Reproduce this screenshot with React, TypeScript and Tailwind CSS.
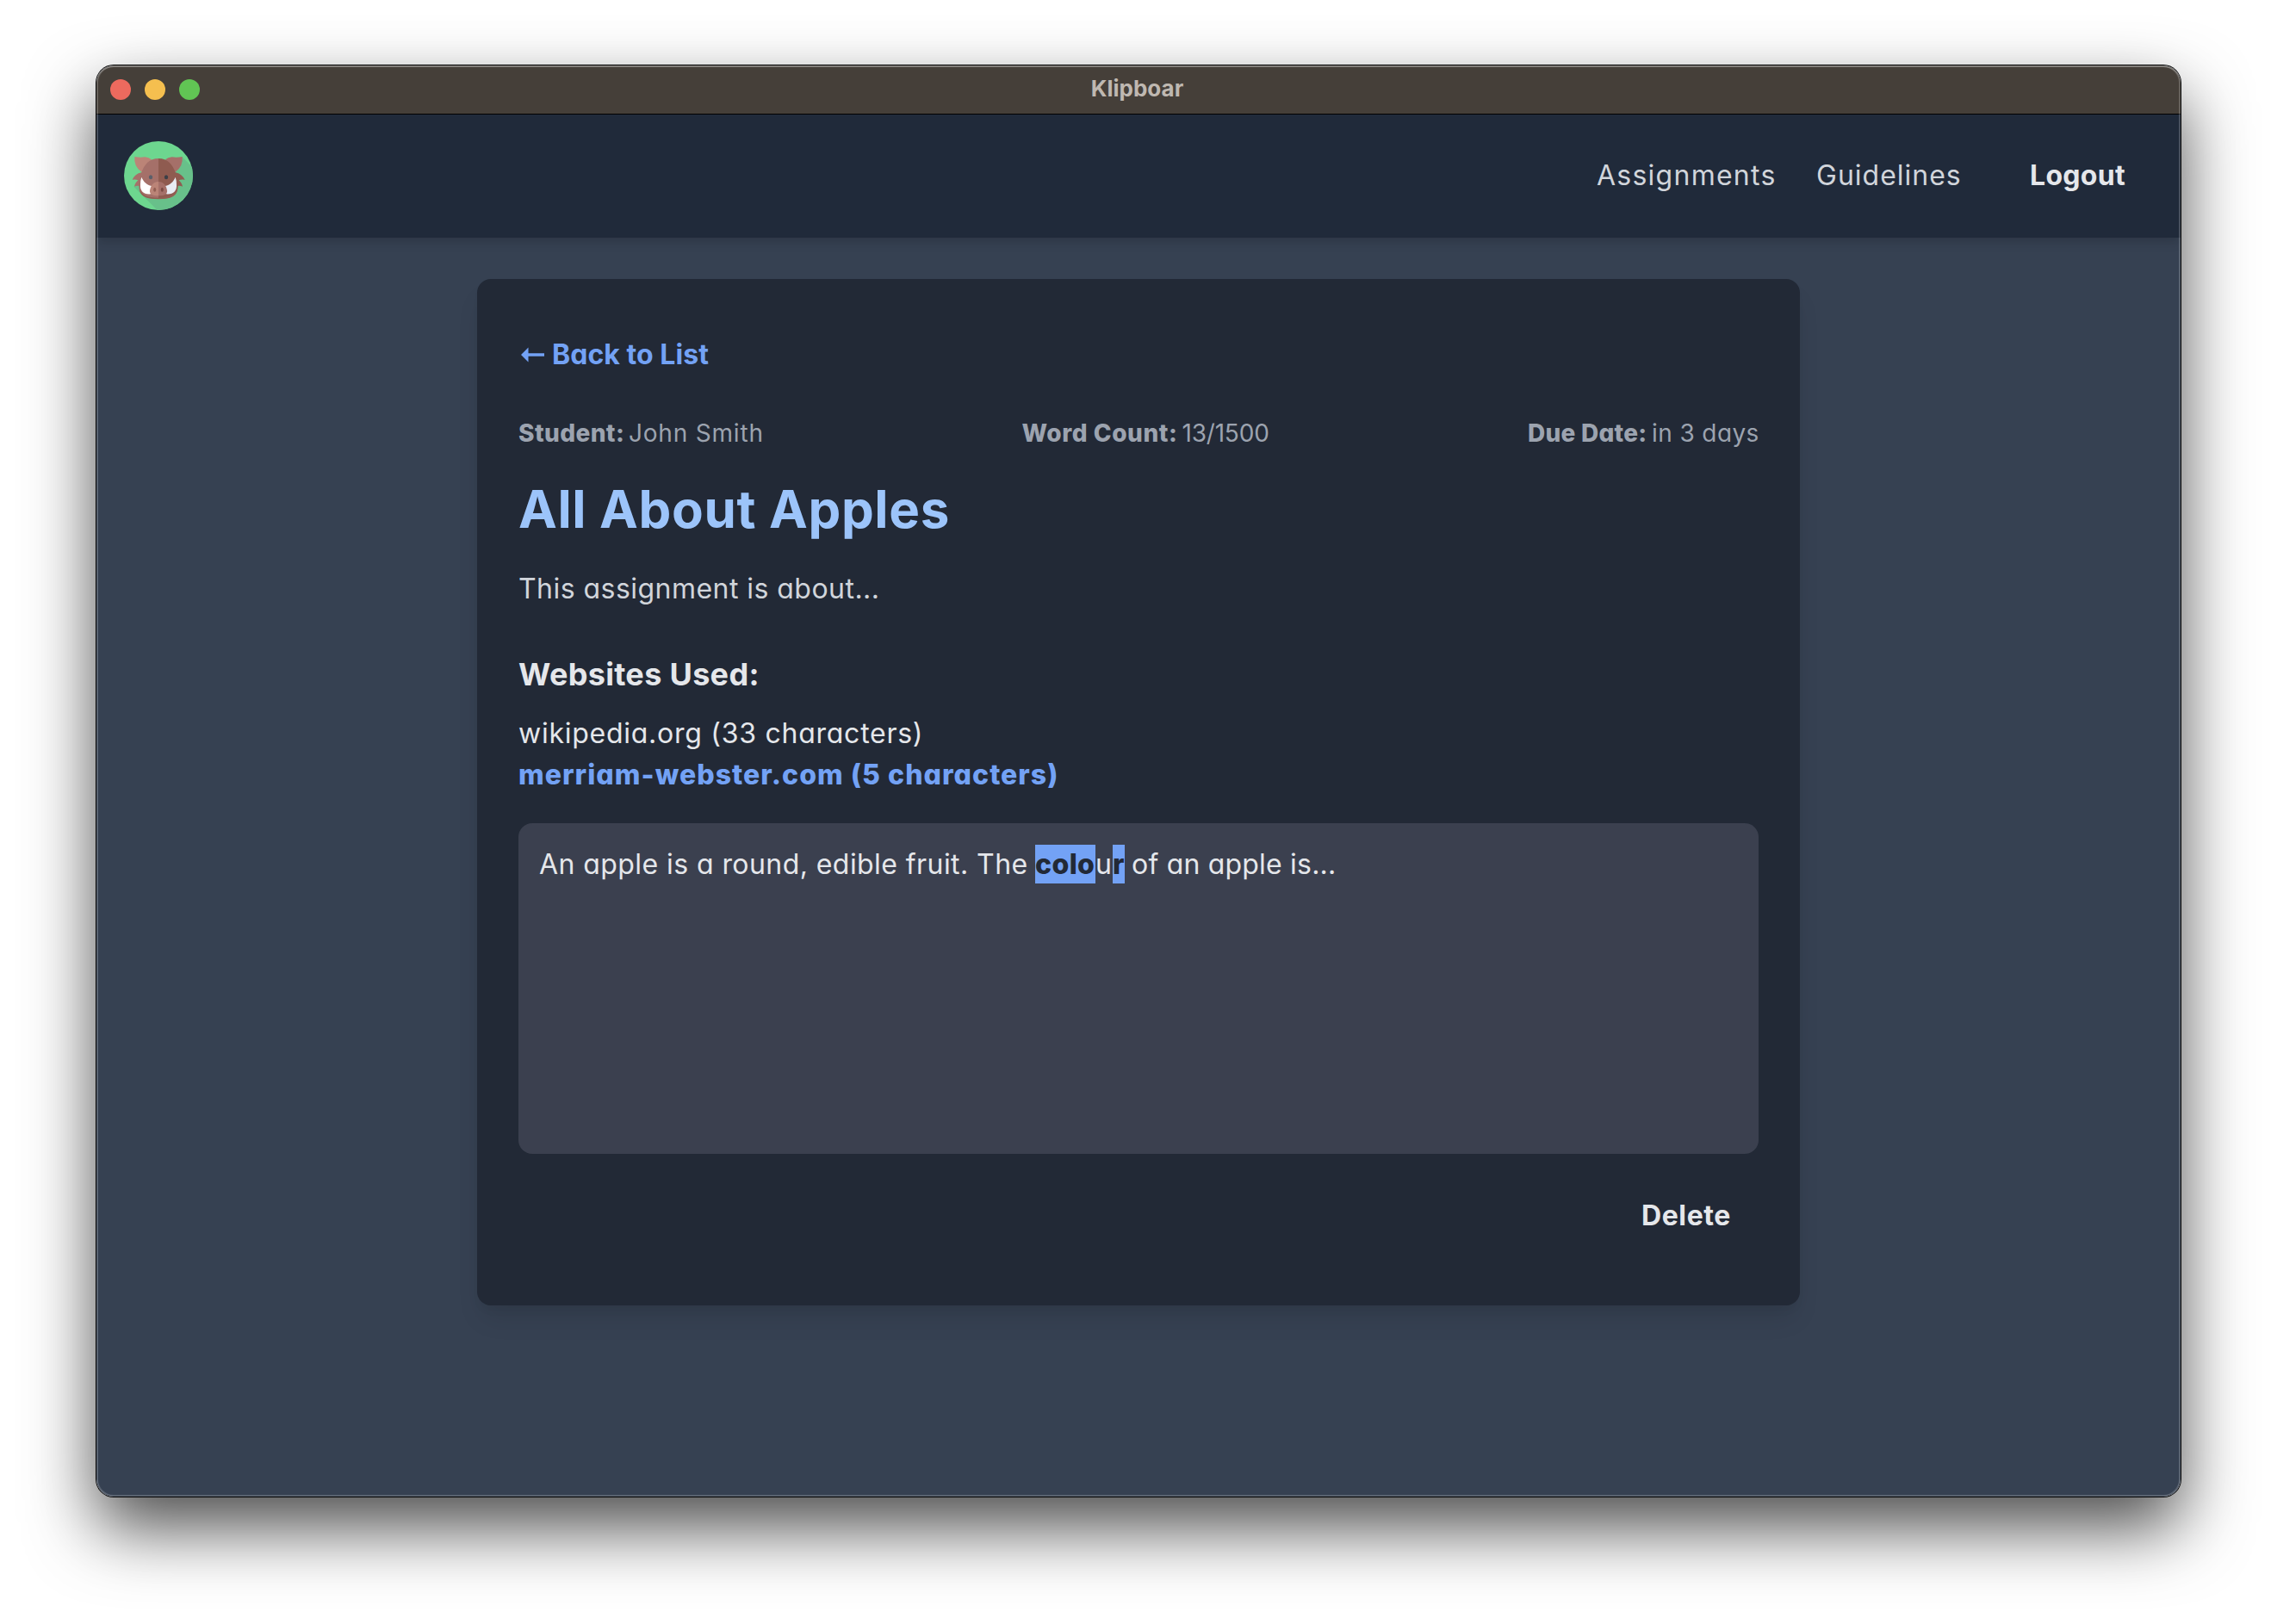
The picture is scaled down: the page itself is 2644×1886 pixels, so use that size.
import React from "react";

function BoarLogo() {
  return (
    <svg className="h-20 w-20 shrink-0" viewBox="132 312 240 240">
      <defs>
        <clipPath id="disc">
          <circle cx="252" cy="432" r="120" />
        </clipPath>
      </defs>
      <circle cx="252" cy="432" r="120" fill="#6dd68f" />
      <path clipPath="url(#disc)" d="M334 366L380 412V560H256L166 470L252 440Z" fill="#68c08a" />
      <path d="M169 366Q188 370 205 367Q219 369 228 376L194 420Q165 400 169 366Z" fill="#bb8477" />
      <path d="M335 366Q316 370 299 367Q285 369 276 376L310 420Q339 400 335 366Z" fill="#a57069" />
      <path d="M252 372C220 372 202 394 193 421C178 424 166 433 161 447C169 444 176 446 181 448C174 455 169 462 168 470C174 467 180 467 184 468C183 498 205 513 252 513Z" fill="#a57069" />
      <path d="M252 372C284 372 302 394 311 421C326 424 338 433 344 447C335 444 328 446 323 448C330 455 335 462 336 470C330 467 324 467 320 468C321 498 299 513 252 513Z" fill="#8f5b50" />
      <path d="M186 474C190 499 215 509 252 509C289 509 314 499 318 474C320 500 299 514 252 514C205 514 184 500 186 474Z" fill="#935e53" />
      <path d="M193 437C200 454 212 464 228 468L226 496C200 498 187 486 189 462Q189 448 193 437Z" fill="#ffffff" />
      <path d="M311 437C304 454 292 464 276 468L278 496C304 498 317 486 315 462Q315 448 311 437Z" fill="#e8ecf4" />
      <path d="M252 453C234 453 225 467 222 483C220 496 230 502 252 502Z" fill="#bb8477" />
      <path d="M252 453C270 453 279 467 282 483C284 496 274 502 252 502Z" fill="#a57069" />
      <ellipse cx="239" cy="481" rx="4.5" ry="7.5" fill="#935e53" />
      <ellipse cx="265" cy="481" rx="4.5" ry="7.5" fill="#7b4a43" />
      <ellipse cx="225" cy="437" rx="6.5" ry="7.5" fill="#5a5f6a" />
      <ellipse cx="279" cy="437" rx="6.5" ry="7.5" fill="#3c3f47" />
    </svg>
  );
}

function TitleBar() {
  return (
    <div className="relative flex h-[57px] shrink-0 items-center border-b border-black bg-[#453f39] pl-4">
      <div className="flex gap-4">
        <span className="h-6 w-6 rounded-full bg-[#ed6a5e]" />
        <span className="h-6 w-6 rounded-full bg-[#f5bf4f]" />
        <span className="h-6 w-6 rounded-full bg-[#61c554]" />
      </div>
      <div className="absolute inset-0 flex items-center justify-center pr-[3px] pb-[3px] text-[26px] font-bold text-[#bfb8b1]">
        <span>Klipboar</span>
      </div>
    </div>
  );
}

function Header() {
  return (
    <header className="relative flex h-[143px] items-center justify-between bg-[#202a3a] px-8 pb-px shadow-[0_8px_12px_-2px_rgba(0,0,0,0.1),0_4px_8px_-2px_rgba(0,0,0,0.06)]">
      <BoarLogo />
      <nav className="flex items-center text-[32px] leading-[48px] whitespace-nowrap text-[#d1d5db]">
        <a className="w-[207px] tracking-[1.25px]">Assignments</a>
        <a className="ml-12 w-[168px] tracking-[1px]">Guidelines</a>
        <button className="ml-12 px-8 font-bold text-[#e5e7eb]">
          <span className="block w-[111px] text-left tracking-[0.3px]">Logout</span>
        </button>
      </nav>
    </header>
  );
}

type MetaProps = { label: string; value: string; labelClass: string; valueClass: string };

function Meta({ label, value, labelClass, valueClass }: MetaProps) {
  return (
    <p className="flex">
      <strong className={labelClass}>{label}</strong>
      <span className={valueClass}>{value}</span>
    </p>
  );
}

export default function App() {
  return (
    <div className="h-[1886px] w-[2644px] overflow-hidden bg-white px-[112px] pt-[76px] font-['Inter',sans-serif] [font-feature-settings:'cv11']">
      <div className="relative h-[1662px] w-[2420px] rounded-[20px] shadow-[0_0_0_1px_#000,0_36px_80px_rgba(0,0,0,0.7)]">
        <div className="flex h-full flex-col overflow-hidden rounded-[20px] bg-[#364152]">
          <div className="[font-feature-settings:normal]">
            <TitleBar />
          </div>
          <Header />
          <main className="flex justify-center pt-12">
            <section className="h-[1192px] w-[1536px] rounded-2xl bg-[#222936] px-12 pt-16 text-[32px] leading-[48px] whitespace-nowrap text-[#e5e7eb] shadow-[0_20px_30px_-6px_rgba(0,0,0,0.1),0_8px_12px_-4px_rgba(0,0,0,0.05)]">
              <a className="flex h-12 items-center font-bold text-[#73a2f5]">
                <svg className="mr-[9px] ml-[3px] h-[18px] w-[27px]" viewBox="0 0 27 18" fill="currentColor">
                  <path d="M0 9L8.5 0.5V7.2H27V10.8H8.5V17.5Z" />
                </svg>
                <span className="tracking-[0.05px]">Back to List</span>
              </a>
              <div className="mt-[47px] flex justify-between text-[28px] leading-10 text-[#9ca3af]">
                <Meta label="Student:" value="John Smith" labelClass="w-[128px] font-extrabold tracking-[0.4px]" valueClass="w-[156px] tracking-[0.8px]" />
                <Meta label="Word Count:" value="13/1500" labelClass="w-[186px] font-extrabold tracking-[0.55px]" valueClass="w-[101px] tracking-[-0.2px]" />
                <Meta label="Due Date:" value="in 3 days" labelClass="w-[144px] font-extrabold tracking-[0.25px]" valueClass="w-[124px] tracking-[0.4px]" />
              </div>
              <h1 className="mt-8 text-[60px] leading-[72px] font-bold tracking-[0.65px] text-[#9cc4fa]">All About Apples</h1>
              <p className="mt-[33px] tracking-[0.46px] text-[#d1d5db]">This assignment is about...</p>
              <h2 className="mt-[47px] text-[36px] leading-[56px] font-bold tracking-[0.32px]">Websites Used:</h2>
              <ul className="mt-[17px]">
                <li className="tracking-[0.74px]">wikipedia.org (33 characters)</li>
                <li className="font-extrabold tracking-[1.05px] text-[#73a2f5]">merriam-webster.com (5 characters)</li>
              </ul>
              <div className="mt-8 flex h-96 items-start rounded-2xl bg-[#3b404f] p-6">
                <span className="w-[576px] tracking-[0.43px]">An apple is a round, edible fruit. The</span>
                <mark className="mt-px h-[45px] w-[70px] bg-[#73a2f5] leading-[46px] font-extrabold tracking-[0.4px] text-[#222936]">colo</mark>
                <span className="w-5">u</span>
                <mark className="mt-px h-[45px] w-[14px] bg-[#73a2f5] leading-[46px] font-extrabold text-[#222936]">r</mark>
                <span className="ml-2 tracking-[0.2px]">of an apple is...</span>
              </div>
              <div className="mt-12 flex justify-end pr-8">
                <button className="w-[104px] text-left font-bold tracking-[0.6px]">Delete</button>
              </div>
            </section>
          </main>
        </div>
        <div className="pointer-events-none absolute inset-0 rounded-[20px] shadow-[inset_0_0_0_2px_rgba(255,255,255,0.18),inset_0_2px_0_rgba(255,255,255,0.2)]" />
      </div>
    </div>
  );
}
